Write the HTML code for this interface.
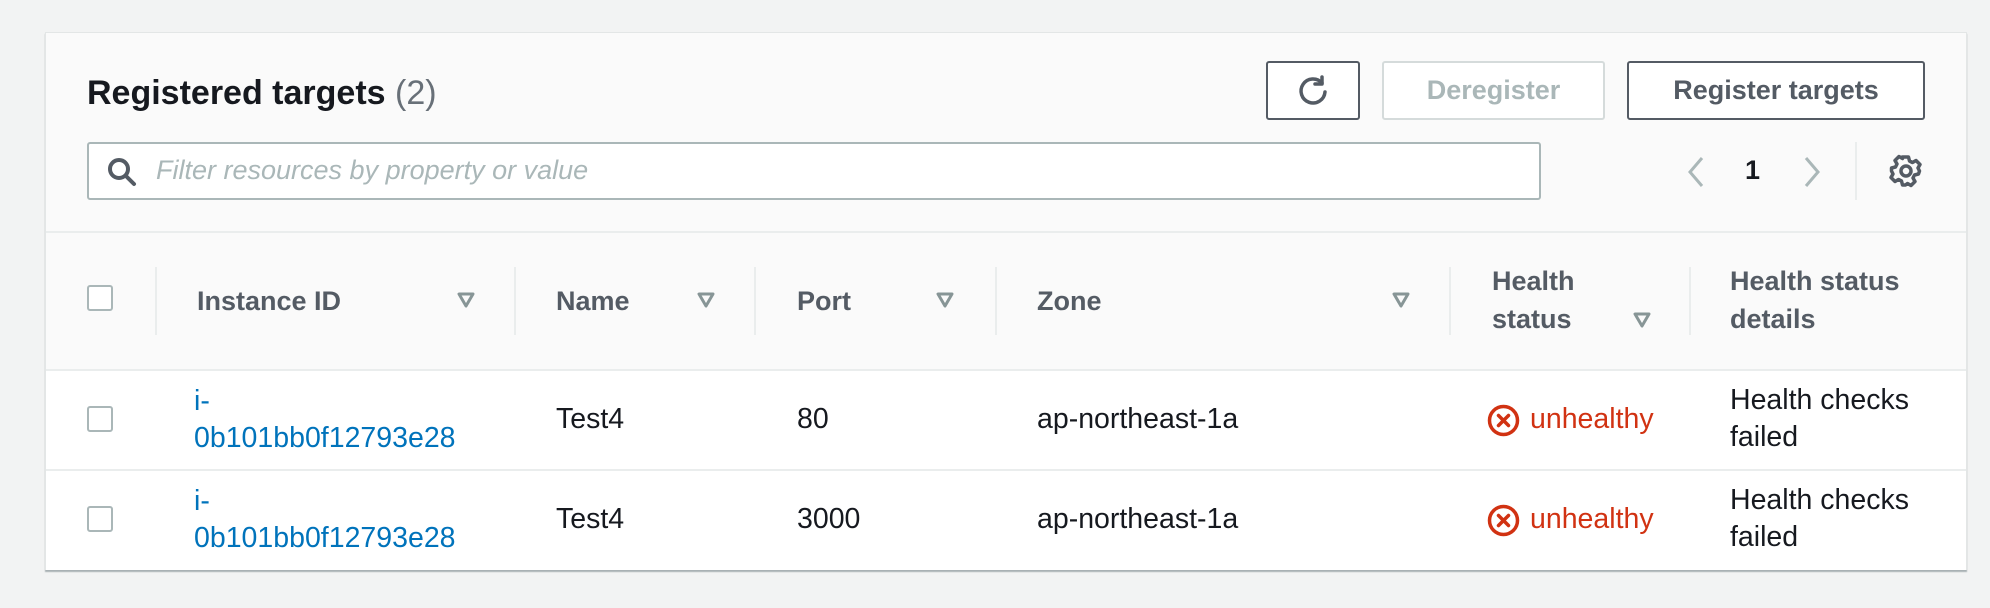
<!DOCTYPE html>
<html><head><meta charset="utf-8"><style>
*{box-sizing:border-box;margin:0;padding:0}
body{width:1990px;height:608px;background:#f2f3f3;font-family:"Liberation Sans",sans-serif;position:relative;overflow:hidden}
.abs{position:absolute}
.panel{left:45px;top:32px;width:1922px;height:538px;background:#fafafa;border:1px solid #e3e6e6;box-shadow:0 2px 1px rgba(0,28,36,.3)}
.btn{position:absolute;top:61px;height:59px;border:2px solid #545b64;border-radius:3px;background:#fff;font-weight:bold;font-size:27px;color:#545b64;display:flex;align-items:center;justify-content:center}
.hd{position:absolute;font-weight:bold;font-size:27px;color:#545b64;line-height:38px}
.div{position:absolute;width:2px;background:#eaeded}
.cb{position:absolute;width:26px;height:26px;border:2px solid #aab7b8;border-radius:3px;background:#fff}
.t{position:absolute;font-size:28.5px;color:#16191f;line-height:37px}
.lnk{color:#0073bb}
.red{color:#d13212}
</style></head><body>
<div class="abs panel"></div>
<div class="abs" style="left:87px;top:72px;font-size:34px;font-weight:bold;color:#16191f;line-height:42px">Registered targets <span style="font-weight:normal;color:#687078">(2)</span></div>

<div class="btn" style="left:1266px;width:94px"><svg width="34" height="34" viewBox="0 0 34 34" fill="none" stroke="#545b64" stroke-width="3.5" stroke-linecap="round" stroke-linejoin="round"><path d="M26 9 A12 12 0 1 0 29 18"/><path d="M26 3 V10 H19"/></svg></div>
<div class="btn" style="left:1382px;width:223px;border-color:#d5dbdb;color:#aab7b8">Deregister</div>
<div class="btn" style="left:1627px;width:298px">Register targets</div>

<div class="abs" style="left:87px;top:142px;width:1454px;height:58px;border:2px solid #aab7b8;border-radius:3px;background:#fff"></div>
<svg class="abs" style="left:106px;top:156px" width="32" height="32" viewBox="0 0 32 32" fill="none" stroke="#545b64" stroke-width="4" stroke-linecap="round"><circle cx="13" cy="13" r="9"/><path d="M20 20 L28 28"/></svg>
<div class="abs" style="left:156px;top:153px;font-size:27px;font-style:italic;color:#aab7b8;line-height:34px">Filter resources by property or value</div>

<svg class="abs" style="left:1684px;top:156px" width="24" height="32" viewBox="0 0 24 32" fill="none" stroke="#aab7b8" stroke-width="3"><path d="M18 2 L6 16 L18 30"/></svg>
<div class="abs" style="left:1745px;top:153px;font-size:27px;font-weight:bold;color:#16191f;line-height:34px">1</div>
<svg class="abs" style="left:1800px;top:156px" width="24" height="32" viewBox="0 0 24 32" fill="none" stroke="#aab7b8" stroke-width="3"><path d="M6 2 L18 16 L6 30"/></svg>
<div class="div" style="left:1855px;top:142px;height:58px"></div>
<svg class="abs" style="left:1889px;top:154px" width="34" height="34" viewBox="0 0 34 34" fill="none" stroke="#545b64" stroke-width="3.5" stroke-linejoin="round"><path d="M14 3h6l1 4 3 1.5 3.5-2 4 4-2 3.5L31 17l-1 3-4 1-1.5 3 2 3.5-4 4-3.5-2L17 31h-3l-1-4-3-1.5-3.5 2-4-4 2-3.5L3 17v-3l4-1 1.5-3-2-3.5 4-4 3.5 2z" transform="translate(-0.5,0)"/><circle cx="17" cy="17" r="5"/></svg>

<div class="abs" style="left:46px;top:231px;width:1920px;height:2px;background:#eaeded"></div>
<div class="cb" style="left:87px;top:285px"></div>
<div class="div" style="left:155px;top:267px;height:68px"></div>
<div class="div" style="left:514px;top:267px;height:68px"></div>
<div class="div" style="left:754px;top:267px;height:68px"></div>
<div class="div" style="left:995px;top:267px;height:68px"></div>
<div class="div" style="left:1449px;top:267px;height:68px"></div>
<div class="div" style="left:1689px;top:267px;height:68px"></div>
<div class="hd" style="left:197px;top:282px">Instance ID</div>
<div class="hd" style="left:556px;top:282px">Name</div>
<div class="hd" style="left:797px;top:282px">Port</div>
<div class="hd" style="left:1037px;top:282px">Zone</div>
<div class="hd" style="left:1492px;top:262px">Health<br>status</div>
<div class="hd" style="left:1730px;top:262px">Health status<br>details</div>
<svg class="abs" style="left:457px;top:292px" width="18" height="16" viewBox="0 0 18 16"><path d="M2 2H16L9 14Z" fill="none" stroke="#879596" stroke-width="3" stroke-linejoin="round"/></svg>
<svg class="abs" style="left:697px;top:292px" width="18" height="16" viewBox="0 0 18 16"><path d="M2 2H16L9 14Z" fill="none" stroke="#879596" stroke-width="3" stroke-linejoin="round"/></svg>
<svg class="abs" style="left:936px;top:292px" width="18" height="16" viewBox="0 0 18 16"><path d="M2 2H16L9 14Z" fill="none" stroke="#879596" stroke-width="3" stroke-linejoin="round"/></svg>
<svg class="abs" style="left:1392px;top:292px" width="18" height="16" viewBox="0 0 18 16"><path d="M2 2H16L9 14Z" fill="none" stroke="#879596" stroke-width="3" stroke-linejoin="round"/></svg>
<svg class="abs" style="left:1633px;top:312px" width="18" height="16" viewBox="0 0 18 16"><path d="M2 2H16L9 14Z" fill="none" stroke="#879596" stroke-width="3" stroke-linejoin="round"/></svg>

<div class="abs" style="left:46px;top:370px;width:1920px;height:200px;background:#fff"></div>
<div class="abs" style="left:46px;top:369px;width:1920px;height:2px;background:#eaeded"></div>
<div class="abs" style="left:46px;top:469px;width:1920px;height:2px;background:#eaeded"></div>

<div class="cb" style="left:87px;top:406px"></div>
<div class="t lnk" style="left:194px;top:383px">i-<br>0b101bb0f12793e28</div>
<div class="t" style="left:556px;top:401px">Test4</div>
<div class="t" style="left:797px;top:401px">80</div>
<div class="t" style="left:1037px;top:401px">ap-northeast-1a</div>
<svg class="abs" style="left:1487px;top:404px" width="33" height="33" viewBox="0 0 33 33" fill="none" stroke="#d13212" stroke-width="3.5" stroke-linecap="round"><circle cx="16.5" cy="16.5" r="14"/><path d="M11.5 11.5l10 10M21.5 11.5l-10 10"/></svg>
<div class="t red" style="left:1530px;top:401px">unhealthy</div>
<div class="t" style="left:1730px;top:382px">Health checks<br>failed</div>

<div class="cb" style="left:87px;top:506px"></div>
<div class="t lnk" style="left:194px;top:483px">i-<br>0b101bb0f12793e28</div>
<div class="t" style="left:556px;top:501px">Test4</div>
<div class="t" style="left:797px;top:501px">3000</div>
<div class="t" style="left:1037px;top:501px">ap-northeast-1a</div>
<svg class="abs" style="left:1487px;top:504px" width="33" height="33" viewBox="0 0 33 33" fill="none" stroke="#d13212" stroke-width="3.5" stroke-linecap="round"><circle cx="16.5" cy="16.5" r="14"/><path d="M11.5 11.5l10 10M21.5 11.5l-10 10"/></svg>
<div class="t red" style="left:1530px;top:501px">unhealthy</div>
<div class="t" style="left:1730px;top:482px">Health checks<br>failed</div>
</body></html>
